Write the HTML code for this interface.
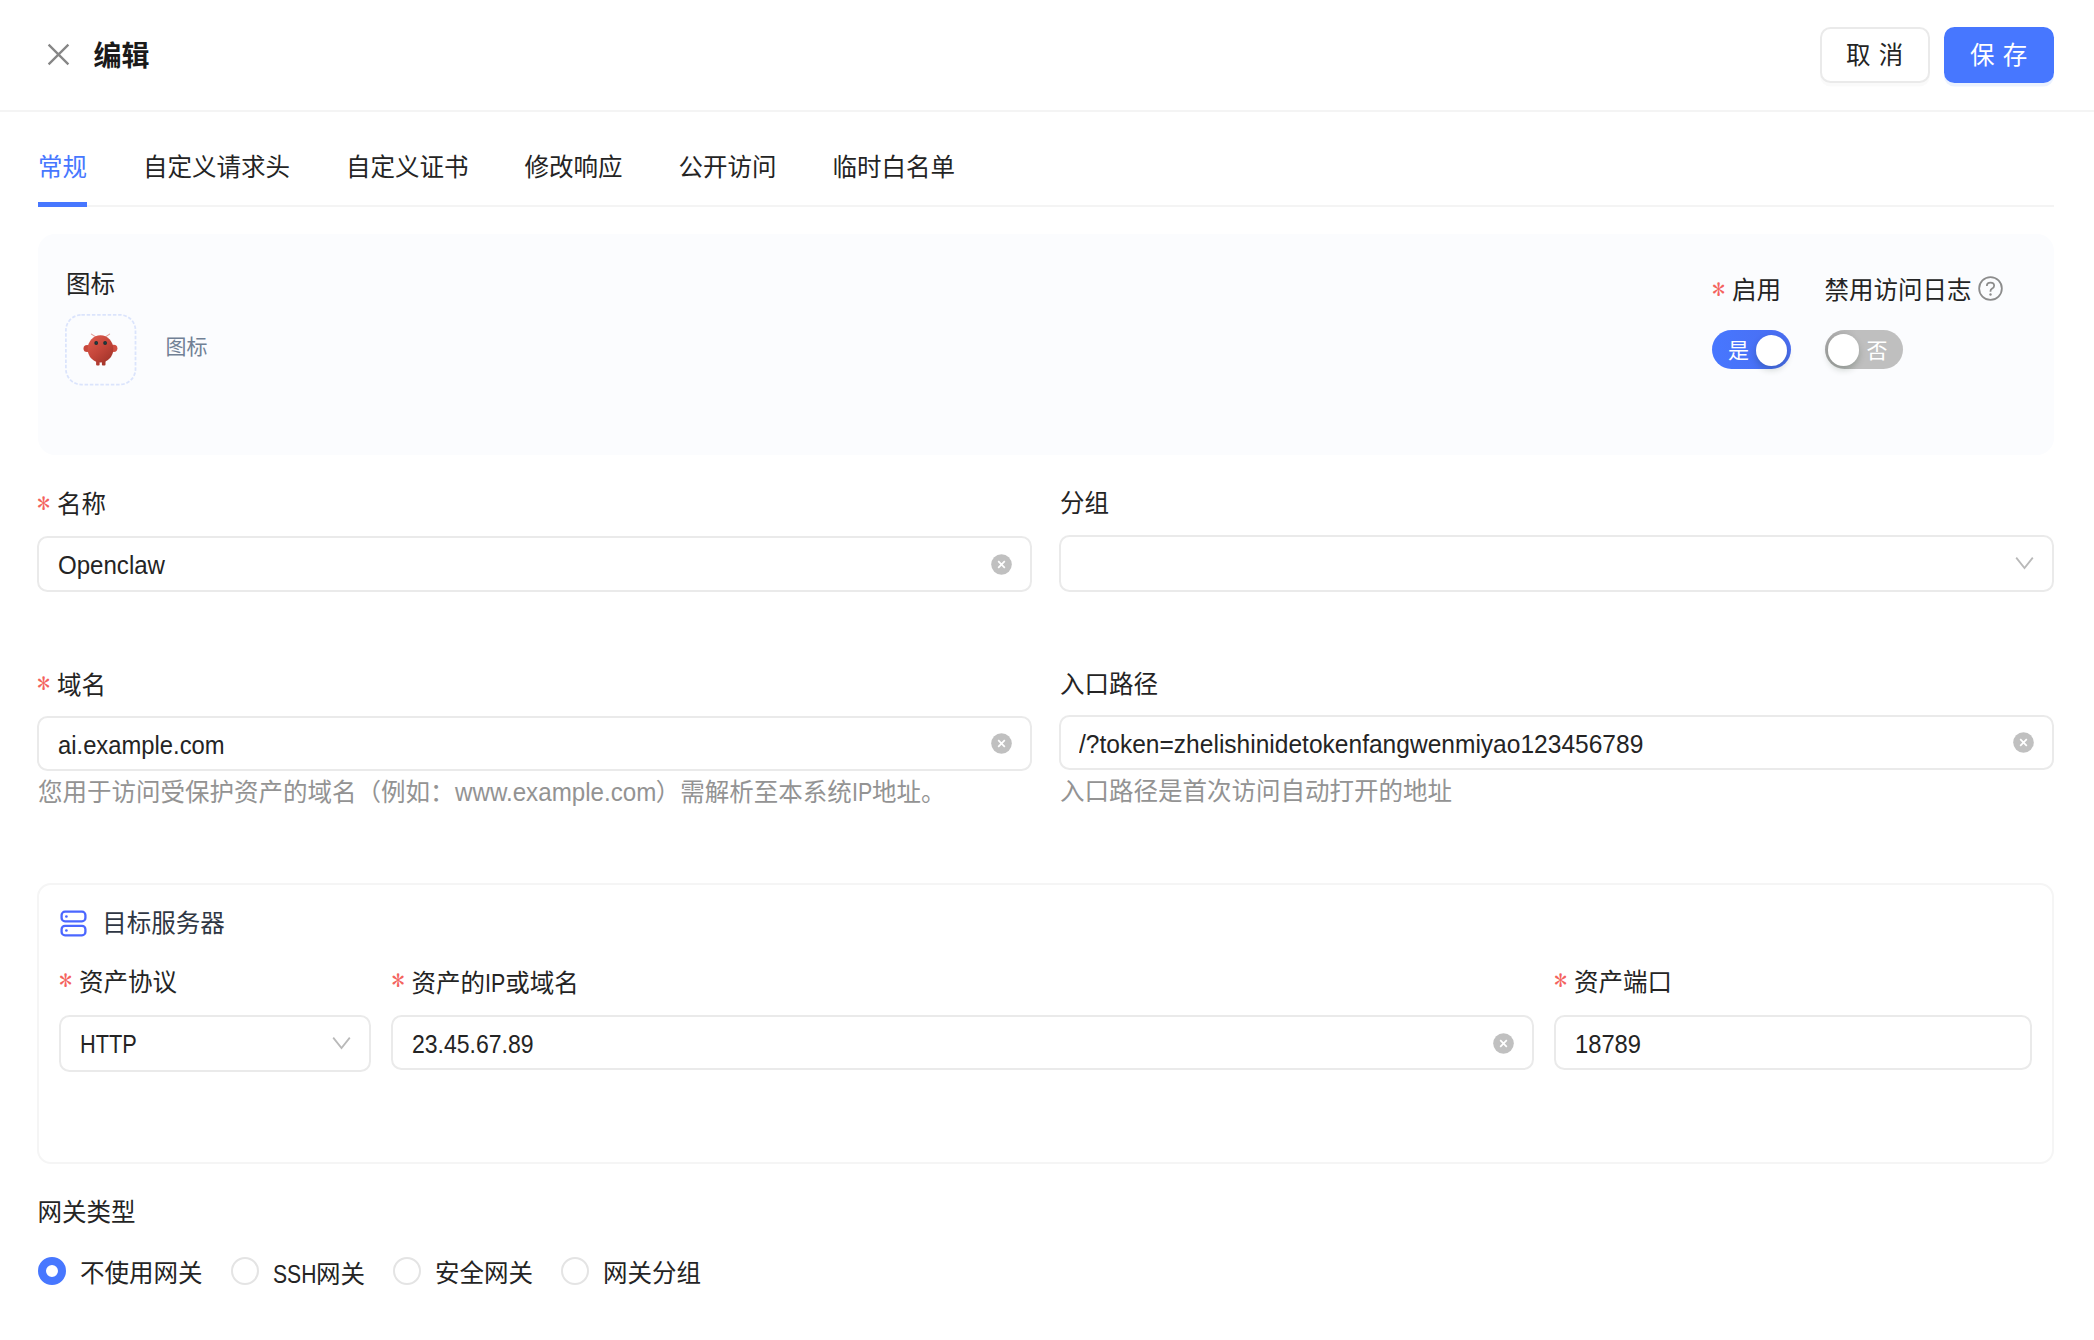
<!DOCTYPE html>
<html lang="zh-CN">
<head>
<meta charset="utf-8">
<title>编辑</title>
<style>
*{box-sizing:border-box;margin:0;padding:0}
html,body{width:2094px;height:1340px;background:#fff;overflow:hidden}
body{position:relative;font-family:"Liberation Sans","Noto Sans CJK SC",sans-serif;font-size:24.5px;color:#242424;line-height:38.5px;-webkit-font-smoothing:antialiased}
.a{position:absolute;white-space:nowrap}
.t{position:absolute;white-space:nowrap;height:38.5px;line-height:38.5px}
.lw{display:inline-block;white-space:nowrap}
.lat{display:inline-block;font-size:25px;transform-origin:0 50%}
.star{position:absolute;color:#f4635e;font-family:"IPAGothic","Liberation Serif",serif;font-size:26.5px;height:38.5px;line-height:38.5px}
.inp{position:absolute;border:2px solid #eaeaea;border-radius:10.5px;background:#fff;height:56px}
.val{position:absolute;white-space:nowrap;height:38.5px;line-height:38.5px;color:#242424}
.help{position:absolute;white-space:nowrap;height:38.5px;line-height:38.5px;color:#939393}
.clr{position:absolute;width:21px;height:21px}
.hl{position:absolute;background:#f4f4f4}
.radio{position:absolute;width:28px;height:28px;border-radius:50%;border:2px solid #e4e4e4;background:#fff}
</style>
</head>
<body>

<!-- header -->
<svg class="a" style="left:47px;top:43px" width="23" height="23" viewBox="0 0 23 23"><path d="M1.6 1.6 L21.4 21.4 M21.4 1.6 L1.6 21.4" stroke="#868686" stroke-width="2.3" fill="none"/></svg>
<div class="a" style="left:93.5px;top:35px;height:44px;line-height:44px;font-size:28px;font-weight:700;color:#1a1a1a">编辑</div>

<div class="a" style="left:1819.5px;top:26.5px;width:110px;height:56px;border:2px solid #eaeaea;border-radius:10.5px;background:#fff;box-shadow:0 3.5px 0 rgba(0,0,0,0.02)"></div>
<div class="t" style="left:1846px;top:37px;letter-spacing:8.3px">取消</div>
<div class="a" style="left:1943.5px;top:26.5px;width:110px;height:56px;border-radius:10.5px;background:#4777ff;box-shadow:0 3.5px 0 rgba(5,95,255,0.08)"></div>
<div class="t" style="left:1970px;top:37px;letter-spacing:8.3px;color:#fff">保存</div>

<div class="hl" style="left:0;top:110px;width:2094px;height:2px"></div>

<!-- tabs -->
<div class="t" style="left:38px;top:149px;color:#4777ff">常规</div>
<div class="t" style="left:143px;top:149px">自定义请求头</div>
<div class="t" style="left:346px;top:149px">自定义证书</div>
<div class="t" style="left:524.5px;top:149px">修改响应</div>
<div class="t" style="left:678.5px;top:149px">公开访问</div>
<div class="t" style="left:832.5px;top:149px">临时白名单</div>
<div class="hl" style="left:38px;top:205px;width:2016px;height:2px"></div>
<div class="a" style="left:38px;top:202px;width:49px;height:4.6px;background:#4777ff"></div>

<!-- top panel -->
<div class="a" style="left:38px;top:234px;width:2016px;height:221px;border-radius:17px;background:#fbfcfe"></div>
<div class="t" style="left:66px;top:265.5px">图标</div>
<svg class="a" style="left:64px;top:313px" width="74" height="74" viewBox="0 0 74 74"><rect x="1.9" y="1.9" width="69.6" height="69.6" rx="15.5" fill="#fbfcfe" stroke="#dbe4fc" stroke-width="1.75" stroke-dasharray="3.5 1.75"/></svg>
<svg class="a" style="left:82px;top:332px" width="38" height="36" viewBox="0 0 38 36">
  <defs>
    <linearGradient id="bd" x1="0.15" y1="0.1" x2="0.85" y2="0.95"><stop offset="0" stop-color="#d9574a"/><stop offset="0.5" stop-color="#c4463a"/><stop offset="1" stop-color="#a3352b"/></linearGradient>
  </defs>
  <path d="M13.4 4.6 L9.4 2.1 M23.8 4.6 L27.6 2.1" stroke="#e29a92" stroke-width="1.1" stroke-linecap="round" fill="none"/>
  <rect x="14.1" y="27" width="3.5" height="6.4" rx="1" fill="#b23c31"/>
  <rect x="19.9" y="27" width="3.6" height="6.4" rx="1" fill="#a8382d"/>
  <circle cx="5.1" cy="16.5" r="3.6" fill="#c8473b"/>
  <circle cx="31.8" cy="16.3" r="3.6" fill="#cf4e41"/>
  <ellipse cx="18.5" cy="16.9" rx="12.8" ry="13.7" fill="url(#bd)"/>
  <circle cx="14.2" cy="11" r="1.9" fill="#1c2f33"/>
  <circle cx="23.1" cy="11" r="1.9" fill="#1c2f33"/>
  <circle cx="14.3" cy="10.9" r="0.7" fill="#1b5558"/>
  <circle cx="23.2" cy="10.9" r="0.7" fill="#1b5558"/>
</svg>
<div class="a" style="left:165.5px;top:330px;height:33px;line-height:33px;font-size:21px;color:#718095">图标</div>

<div class="star" style="left:1712px;top:269.5px">*</div>
<div class="t" style="left:1732px;top:272px">启用</div>
<div class="t" style="left:1824.5px;top:272px">禁用访问日志</div>
<svg class="a" style="left:1978.1px;top:276.1px" width="25" height="25" viewBox="0 0 24 24"><circle cx="12" cy="12" r="10.9" fill="none" stroke="#8c8c8c" stroke-width="1.7"/><path d="M8.5 9.5 C8.5 7.5 10.1 6.3 12 6.3 C13.9 6.3 15.5 7.5 15.5 9.3 C15.5 10.9 14.3 11.7 13.3 12.3 C12.4 12.9 12 13.4 12 14.4 V15" fill="none" stroke="#8c8c8c" stroke-width="1.7"/><circle cx="12" cy="17.8" r="1.15" fill="#8c8c8c"/></svg>

<!-- switches -->
<div class="a" style="left:1712.3px;top:330.4px;width:78.4px;height:38.6px;border-radius:20px;background:linear-gradient(90deg,#4777ff,#4a6df0)"></div>
<div class="a" style="left:1755.5px;top:334.5px;width:31.5px;height:31.5px;border-radius:50%;background:#fff;box-shadow:0 3.5px 7px rgba(0,35,11,0.2)"></div>
<div class="a" style="left:1728px;top:334px;height:33px;line-height:33px;font-size:21px;color:#fff">是</div>
<div class="a" style="left:1824.5px;top:330px;width:78.3px;height:38.5px;border-radius:20px;background:linear-gradient(90deg,#a6a6a6,#bfbfbf 40%)"></div>
<div class="a" style="left:1827.5px;top:334px;width:31.5px;height:31.5px;border-radius:50%;background:#fff;box-shadow:0 3.5px 7px rgba(0,35,11,0.2)"></div>
<div class="a" style="left:1866.5px;top:333.5px;height:33px;line-height:33px;font-size:21px;color:#fff">否</div>

<!-- row 1 -->
<div class="star" style="left:37px;top:483.5px">*</div>
<div class="t" style="left:57px;top:486px">名称</div>
<div class="inp" style="left:37px;top:536px;width:995px"></div>
<div class="val" style="left:57.5px;top:546px"><span class="lw" style="width:107.0px"><span class="lat" style="transform:scaleX(0.9625)">Openclaw</span></span></div>
<div class="t" style="left:1060px;top:485px">分组</div>
<div class="inp" style="left:1059px;top:535px;width:995px;height:56.5px"></div>

<!-- row 2 -->
<div class="star" style="left:37px;top:663.5px">*</div>
<div class="t" style="left:57px;top:666.5px">域名</div>
<div class="inp" style="left:37px;top:716px;width:995px;height:55px"></div>
<div class="val" style="left:57.5px;top:726px"><span class="lw" style="width:166.6px"><span class="lat" style="transform:scaleX(0.9516)">ai.example.com</span></span></div>
<div class="help" style="left:38px;top:773px">您用于访问受保护资产的域名（例如：<span class="lw" style="width:201.3px"><span class="lat" style="transform:scaleX(0.9659)">www.example.com</span></span>）需解析至本系统<span class="lw" style="width:20.2px"><span class="lat" style="transform:scaleX(0.8550)">IP</span></span>地址。</div>
<div class="t" style="left:1060px;top:666px">入口路径</div>
<div class="inp" style="left:1059px;top:715px;width:995px;height:55px"></div>
<div class="val" style="left:1079px;top:725px"><span class="lw" style="width:564.3px"><span class="lat" style="transform:scaleX(0.9818)">/?token=zhelishinidetokenfangwenmiyao123456789</span></span></div>
<div class="help" style="left:1060px;top:772.5px">入口路径是首次访问自动打开的地址</div>

<!-- server card -->
<div class="a" style="left:37px;top:883px;width:2017px;height:280.7px;border:2px solid #f5f5f5;border-radius:14px;background:#fff"></div>
<svg class="a" style="left:59px;top:909px" width="29" height="29" viewBox="0 0 29 29"><g fill="none" stroke="#4b67ff" stroke-width="2.3"><rect x="2.6" y="2.7" width="23.8" height="9.6" rx="3.4"/><rect x="2.6" y="16.8" width="23.8" height="9.5" rx="3.4"/></g><circle cx="7.4" cy="7.5" r="1.35" fill="#4b67ff"/><circle cx="7.4" cy="21.5" r="1.35" fill="#4b67ff"/></svg>
<div class="t" style="left:102.2px;top:905px;color:#2f3744">目标服务器</div>

<div class="star" style="left:59px;top:961px">*</div>
<div class="t" style="left:79px;top:964px">资产协议</div>
<div class="inp" style="left:59px;top:1015px;width:311.5px;height:56.5px"></div>
<div class="val" style="left:80px;top:1024.5px"><span class="lw" style="width:56.8px"><span class="lat" style="transform:scaleX(0.8701)">HTTP</span></span></div>

<div class="star" style="left:391.5px;top:961px">*</div>
<div class="t" style="left:411.5px;top:964px">资产的<span class="lw" style="width:20.2px"><span class="lat" style="transform:scaleX(0.8550)">IP</span></span>或域名</div>
<div class="inp" style="left:391px;top:1015.3px;width:1142.5px;height:55.2px"></div>
<div class="val" style="left:411.5px;top:1024.5px"><span class="lw" style="width:121.6px"><span class="lat" style="transform:scaleX(0.9207)">23.45.67.89</span></span></div>

<div class="star" style="left:1554px;top:961px">*</div>
<div class="t" style="left:1574px;top:964px">资产端口</div>
<div class="inp" style="left:1554px;top:1015.3px;width:477.5px;height:55.2px"></div>
<div class="val" style="left:1575px;top:1024.5px"><span class="lw" style="width:66.0px"><span class="lat" style="transform:scaleX(0.9492)">18789</span></span></div>

<!-- icons -->
<svg class="clr" style="left:990.5px;top:553.5px" viewBox="0 0 21 21"><circle cx="10.5" cy="10.5" r="10.3" fill="#c0c0c0"/><path d="M7.2 7.2 L13.8 13.8 M13.8 7.2 L7.2 13.8" stroke="#fff" stroke-width="1.7" fill="none"/></svg>
<svg class="clr" style="left:990.5px;top:733.0px" viewBox="0 0 21 21"><circle cx="10.5" cy="10.5" r="10.3" fill="#c0c0c0"/><path d="M7.2 7.2 L13.8 13.8 M13.8 7.2 L7.2 13.8" stroke="#fff" stroke-width="1.7" fill="none"/></svg>
<svg class="clr" style="left:2012.5px;top:732.0px" viewBox="0 0 21 21"><circle cx="10.5" cy="10.5" r="10.3" fill="#c0c0c0"/><path d="M7.2 7.2 L13.8 13.8 M13.8 7.2 L7.2 13.8" stroke="#fff" stroke-width="1.7" fill="none"/></svg>
<svg class="clr" style="left:1492.5px;top:1032.5px" viewBox="0 0 21 21"><circle cx="10.5" cy="10.5" r="10.3" fill="#c0c0c0"/><path d="M7.2 7.2 L13.8 13.8 M13.8 7.2 L7.2 13.8" stroke="#fff" stroke-width="1.7" fill="none"/></svg>
<svg class="a" style="left:2014.5px;top:556px" width="19" height="14" viewBox="0 0 19 14"><path d="M1.2 1.6 L9.5 12 L17.8 1.6" stroke="#b9b9b9" stroke-width="1.8" fill="none"/></svg>
<svg class="a" style="left:331.5px;top:1036px" width="19" height="14" viewBox="0 0 19 14"><path d="M1.2 1.6 L9.5 12 L17.8 1.6" stroke="#b9b9b9" stroke-width="1.8" fill="none"/></svg>
<!-- gateway -->
<div class="t" style="left:37.5px;top:1193.5px">网关类型</div>
<div class="radio" style="left:37.5px;top:1257px;border:8.5px solid #4777ff"></div>
<div class="t" style="left:80px;top:1254.5px">不使用网关</div>
<div class="radio" style="left:230.5px;top:1257px"></div>
<div class="t" style="left:272.5px;top:1254.5px"><span class="lw" style="width:43.4px"><span class="lat" style="transform:scaleX(0.8442)">SSH</span></span>网关</div>
<div class="radio" style="left:392.5px;top:1257px"></div>
<div class="t" style="left:435px;top:1254.5px">安全网关</div>
<div class="radio" style="left:560.5px;top:1257px"></div>
<div class="t" style="left:603px;top:1254.5px">网关分组</div>

</body>
</html>
